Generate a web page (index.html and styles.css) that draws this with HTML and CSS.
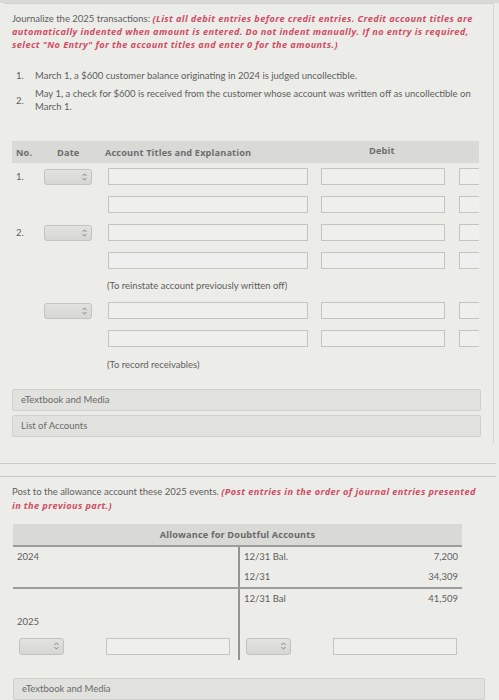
FILE: index.html
```html
<!DOCTYPE html>
<html>
<head>
<meta charset="utf-8">
<link rel="stylesheet" href="styles.css">
</head>
<body>
<div class="topband"></div>
<div class="panel">
  <p class="intro">Journalize the 2025 transactions: <em class="red">(List all debit entries before credit entries. Credit account titles are automatically indented when amount is entered. Do not indent manually. If no entry is required, select "No Entry" for the account titles and enter 0 for the amounts.)</em></p>
  <ol class="items">
    <li class="item"><span class="num">1.</span><span class="itext">March 1, a $600 customer balance originating in 2024 is judged uncollectible.</span></li>
    <li class="item item2"><span class="num">2.</span><span class="itext">May 1, a check for $600 is received from the customer whose account was written off as uncollectible on March 1.</span></li>
  </ol>

  <div class="journal">
    <div class="jhead">
      <span class="h-no">No.</span>
      <span class="h-date">Date</span>
      <span class="h-acct">Account Titles and Explanation</span>
      <span class="h-debit">Debit</span>
    </div>
    <div class="jrow">
      <span class="c-no">1.</span>
      <span class="sel"><i class="arr"><svg width="5" height="8" viewBox="0 0 5 8"><path d="M0.5 3 L2.5 0.8 L4.5 3 M0.5 5 L2.5 7.2 L4.5 5" fill="none" stroke="#8a8a8a" stroke-width="1"/></svg></i></span>
      <span class="inp acct"></span>
      <span class="inp debit"></span>
      <span class="inp credit"></span>
    </div>
    <div class="jrow">
      <span class="c-no"></span>
      <span class="nosel"></span>
      <span class="inp acct"></span>
      <span class="inp debit"></span>
      <span class="inp credit"></span>
    </div>
    <div class="jrow">
      <span class="c-no">2.</span>
      <span class="sel"><i class="arr"><svg width="5" height="8" viewBox="0 0 5 8"><path d="M0.5 3 L2.5 0.8 L4.5 3 M0.5 5 L2.5 7.2 L4.5 5" fill="none" stroke="#8a8a8a" stroke-width="1"/></svg></i></span>
      <span class="inp acct"></span>
      <span class="inp debit"></span>
      <span class="inp credit"></span>
    </div>
    <div class="jrow">
      <span class="c-no"></span>
      <span class="nosel"></span>
      <span class="inp acct"></span>
      <span class="inp debit"></span>
      <span class="inp credit"></span>
    </div>
    <p class="note note1">(To reinstate account previously written off)</p>
    <div class="jrow">
      <span class="c-no"></span>
      <span class="sel"><i class="arr"><svg width="5" height="8" viewBox="0 0 5 8"><path d="M0.5 3 L2.5 0.8 L4.5 3 M0.5 5 L2.5 7.2 L4.5 5" fill="none" stroke="#8a8a8a" stroke-width="1"/></svg></i></span>
      <span class="inp acct"></span>
      <span class="inp debit"></span>
      <span class="inp credit"></span>
    </div>
    <div class="jrow">
      <span class="c-no"></span>
      <span class="nosel"></span>
      <span class="inp acct"></span>
      <span class="inp debit"></span>
      <span class="inp credit"></span>
    </div>
    <p class="note note2">(To record receivables)</p>
  </div>

  <div class="bar first">eTextbook and Media</div>
  <div class="bar">List of Accounts</div>
</div>

<div class="rule rule1"></div>
<div class="rule rule2"></div>

<div class="part2">
  <p class="intro2">Post to the allowance account these 2025 events. <em class="red">(Post entries in the order of journal entries presented in the previous part.)</em></p>
  <div class="taccount">
    <div class="thead">Allowance for Doubtful Accounts</div>
    <div class="tbody">
      <div class="tl">2024</div>
      <div class="tr"><span>12/31 Bal.</span><span>7,200</span></div>
      <div class="tl upper-end"></div>
      <div class="tr upper-end"><span>12/31</span><span>34,309</span></div>
      <div class="tl"></div>
      <div class="tr"><span>12/31 Bal</span><span>41,509</span></div>
      <div class="tl yr">2025</div>
      <div class="tr"></div>
      <div class="tl inputs">
        <span class="sel small"><i class="arr"><svg width="5" height="8" viewBox="0 0 5 8"><path d="M0.5 3 L2.5 0.8 L4.5 3 M0.5 5 L2.5 7.2 L4.5 5" fill="none" stroke="#8a8a8a" stroke-width="1"/></svg></i></span>
        <span class="inp tamt"></span>
      </div>
      <div class="tr inputs">
        <span class="sel small"><i class="arr"><svg width="5" height="8" viewBox="0 0 5 8"><path d="M0.5 3 L2.5 0.8 L4.5 3 M0.5 5 L2.5 7.2 L4.5 5" fill="none" stroke="#8a8a8a" stroke-width="1"/></svg></i></span>
        <span class="inp tamt"></span>
      </div>
    </div>
  </div>
  <div class="bar bottom">eTextbook and Media</div>
</div>
</body>
</html>
```
FILE: styles.css
```css
html, body {
  margin: 0;
  padding: 0;
}
body {
  width: 499px;
  height: 700px;
  overflow: hidden;
  background: #ecece9;
  font-family: Lato, "Liberation Sans", sans-serif;
  color: #5e5e5e;
  font-size: 9.5px;
}
.topband {
  height: 3px;
  background: #d9d9d6;
}
.panel {
  margin: 0 5px 0 4px;
  border-top: 1px solid #d2d2cf;
  border-right: 1px solid #d6d6d3;
  padding: 8px 0 0 8px;
  height: 440px;
  box-sizing: border-box;
}
.intro {
  margin: 0;
  line-height: 13px;
  padding-right: 6px;
}
.red {
  font-family: "Open Sans", "DejaVu Sans", sans-serif;
  font-style: italic;
  font-weight: 700;
  color: #cf4c62;
  font-size: 9.2px;
  line-height: 13px;
  letter-spacing: 0.4px;
}
.items {
  list-style: none;
  margin: 18px 0 0 0;
  padding: 0 0 0 4px;
}
.item {
  display: flex;
  align-items: center;
  line-height: 13px;
}
.item2 {
  margin-top: 5px;
}
.num {
  width: 19px;
  flex: none;
}
.itext {
  width: 446px;
}
.journal {
  margin-top: 28px;
  width: 467px;
  overflow: hidden;
}
.jhead {
  height: 22px;
  background: #d9d9d6;
  display: grid;
  grid-template-columns: 32px 48px 16px 200px 1fr;
  align-items: center;
  font-family: "Open Sans", "DejaVu Sans", sans-serif;
  font-weight: 700;
  font-size: 9.2px;
  letter-spacing: 0.15px;
  color: #6e6e6e;
  margin-bottom: 5px;
}
.h-no { padding-left: 4px; }
.h-date { padding-left: 13px; }
.h-acct { grid-column: 4; margin-left: -3px; }
.h-debit {
  grid-column: 5;
  padding-left: 61px;
  align-self: start;
  padding-top: 3px;
}
.jrow {
  display: grid;
  grid-template-columns: 32px 48px 16px 200px 13px 124px 14px 40px;
  height: 17px;
  margin-bottom: 11px;
  align-items: center;
}
.jrow > .c-no { grid-column: 1; padding-left: 4px; }
.jrow > .sel, .jrow > .nosel { grid-column: 2; }
.jrow > .acct { grid-column: 4; }
.jrow > .debit { grid-column: 6; }
.jrow > .credit { grid-column: 8; }
.sel {
  display: block;
  position: relative;
  height: 16px;
  border: 1px solid #c2c2c0;
  border-radius: 3px;
  background: linear-gradient(#e2e2e0, #d6d6d4);
  box-sizing: border-box;
}
.arr {
  position: absolute;
  right: 4px;
  top: 3px;
  line-height: 0;
}
.inp {
  display: block;
  height: 17px;
  border: 1px solid #c4c4c2;
  background: #efefed;
  box-sizing: border-box;
}
.note {
  margin: 0 0 0 95px;
  line-height: 14px;
  font-size: 9.5px;
}
.note1 {
  margin-top: -1px;
  margin-bottom: 9px;
}
.note2 {
  margin-top: 0;
}
.bar {
  width: 469px;
  height: 22px;
  box-sizing: border-box;
  border: 1px solid #cfcfcc;
  border-radius: 2px;
  background: #e1e1de;
  line-height: 20px;
  padding-left: 8px;
  font-size: 9.5px;
  color: #6a6a6a;
}
.bar.first { margin-top: 17px; }
.bar + .bar { margin-top: 4px; }
.rule {
  height: 1px;
  width: 496px;
  background: #c9c9c6;
}
.rule1 { margin-top: 20px; }
.rule2 { margin-top: 12px; }
.part2 {
  padding: 8px 0 0 12px;
}
.intro2 {
  margin: 0;
  line-height: 14px;
  width: 470px;
}
.taccount {
  margin-top: 11px;
  margin-left: 1px;
  width: 449px;
}
.thead {
  height: 21px;
  background: #d9d9d6;
  border-bottom: 2px solid #9c9c9a;
  text-align: center;
  line-height: 21px;
  font-family: "Open Sans", "DejaVu Sans", sans-serif;
  font-weight: 700;
  font-size: 9.2px;
  letter-spacing: 0.15px;
  color: #6a6a6a;
}
.tbody {
  display: grid;
  grid-template-columns: 225px 224px;
}
.tl {
  height: 20px;
  line-height: 20px;
  padding-left: 4px;
}
.tr {
  height: 20px;
  line-height: 20px;
  border-left: 2px solid #949492;
  display: flex;
  justify-content: space-between;
  padding: 0 4px 0 4px;
}
.upper-end {
  border-bottom: 2px solid #9c9c9a;
}
.yr {
  line-height: 14px;
  height: 20px;
  padding-top: 6px;
  box-sizing: border-box;
}
.inputs {
  height: 31px;
  padding-top: 9px;
  box-sizing: border-box;
  display: flex;
  align-items: flex-start;
  justify-content: flex-start;
}
.tl.inputs { padding-left: 6px; }
.tr.inputs { padding-left: 6px; }
.sel.small {
  width: 45px;
  height: 17px;
  flex: none;
}
.tl .tamt { margin-left: 42px; width: 124px; }
.tr .tamt { margin-left: 42px; width: 124px; }
.bar.bottom {
  margin-top: 18px;
  margin-left: 1px;
  width: 472px;
}
```
